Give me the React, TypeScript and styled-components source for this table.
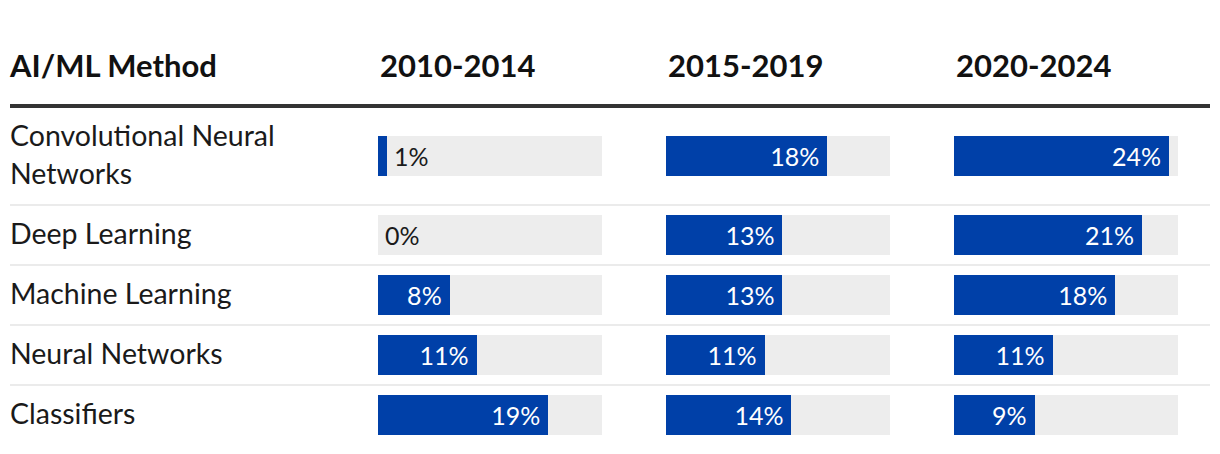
import React from "react";
import styled, { createGlobalStyle } from "styled-components";

const Global = createGlobalStyle`
  html, body { margin: 0; padding: 0; background: #fff; }
  body { font-family: Lato, "Noto Sans", sans-serif; color: #1a1a1a; }
`;

const Wrap = styled.div`
  padding: 38px 10px 0;
`;

const Table = styled.div`
  display: grid;
  grid-template-columns: 368px 288px 288px 1fr;
  width: 1200px;
`;

const HeadCell = styled.div<{ $pad?: number }>`
  font-size: 31px;
  font-weight: 700;
  line-height: 38px;
  color: #111;
  padding: 8px 0 20px ${(p) => p.$pad ?? 0}px;
  border-bottom: 4px solid #333;
`;

const Cell = styled.div<{ $last?: boolean }>`
  display: flex;
  align-items: center;
  font-size: 28.5px;
  line-height: 38px;
  padding: 8px 0 12px;
  border-bottom: ${(p) => (p.$last ? "none" : "2px solid #ebebeb")};
`;

const BarCell = styled(Cell)`
  padding: 0;
`;

const Name = styled.span`
  max-width: 300px;
  color: #1a1a1a;
`;

const Track = styled.div`
  width: 224px;
  height: 40px;
  background: #ededed;
  display: flex;
  align-items: center;
`;

const Fill = styled.div`
  height: 100%;
  background: #0040a8;
  display: flex;
  align-items: center;
  justify-content: flex-end;
  flex: none;
`;

const Inside = styled.span`
  color: #fff;
  font-size: 25px;
  padding-right: 8px;
  line-height: 1;
`;

const Outside = styled.span`
  color: #1a1a1a;
  font-size: 25px;
  padding-left: 7px;
  line-height: 1;
`;

const rows: { name: string; v: number[] }[] = [
  { name: "Convolutional Neural Networks", v: [1, 18, 24] },
  { name: "Deep Learning", v: [0, 13, 21] },
  { name: "Machine Learning", v: [8, 13, 18] },
  { name: "Neural Networks", v: [11, 11, 11] },
  { name: "Classifiers", v: [19, 14, 9] },
];

const Bar = ({ value }: { value: number }) => {
  const pct = (value / 25) * 100;
  const inside = value >= 5;
  return (
    <Track>
      {value > 0 && (
        <Fill style={{ width: `${pct}%` }}>
          {inside && <Inside>{value}%</Inside>}
        </Fill>
      )}
      {!inside && <Outside>{value}%</Outside>}
    </Track>
  );
};

export default function App() {
  return (
    <>
      <Global />
      <Wrap>
        <Table>
          <HeadCell>AI/ML Method</HeadCell>
          <HeadCell $pad={2}>2010-2014</HeadCell>
          <HeadCell $pad={2}>2015-2019</HeadCell>
          <HeadCell $pad={2}>2020-2024</HeadCell>
          {rows.map((r, i) => {
            const last = i === rows.length - 1;
            return (
              <React.Fragment key={r.name}>
                <Cell $last={last}>
                  <Name>{r.name}</Name>
                </Cell>
                {r.v.map((v, j) => (
                  <BarCell key={j} $last={last}>
                    <Bar value={v} />
                  </BarCell>
                ))}
              </React.Fragment>
            );
          })}
        </Table>
      </Wrap>
    </>
  );
}
